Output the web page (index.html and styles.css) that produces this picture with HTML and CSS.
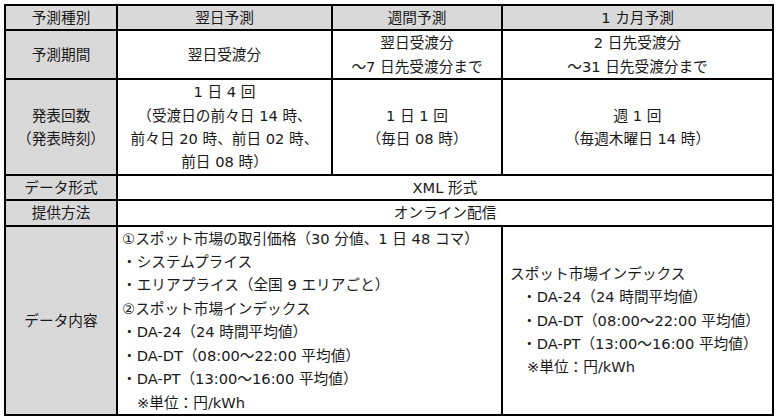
FILE: index.html
```html
<!DOCTYPE html>
<html lang="ja">
<head>
<meta charset="utf-8">
<link rel="stylesheet" href="styles.css">
</head>
<body>
<table class="spec">
  <colgroup>
    <col class="c1"><col class="c2"><col class="c3"><col class="c4">
  </colgroup>
  <tr class="head">
    <th>予測種別</th>
    <th>翌日予測</th>
    <th>週間予測</th>
    <th>1 カ月予測</th>
  </tr>
  <tr>
    <th>予測期間</th>
    <td>翌日受渡分</td>
    <td>翌日受渡分<br>～7 日先受渡分まで</td>
    <td>2 日先受渡分<br>～31 日先受渡分まで</td>
  </tr>
  <tr>
    <th>発表回数<br>（発表時刻）</th>
    <td>1 日 4 回<br>（受渡日の前々日 14 時、<br>前々日 20 時、前日 02 時、<br>前日 08 時）</td>
    <td>1 日 1 回<br>（毎日 08 時）</td>
    <td>週 1 回<br>（毎週木曜日 14 時）</td>
  </tr>
  <tr>
    <th>データ形式</th>
    <td colspan="3">XML 形式</td>
  </tr>
  <tr>
    <th>提供方法</th>
    <td colspan="3">オンライン配信</td>
  </tr>
  <tr>
    <th>データ内容</th>
    <td colspan="2" class="list left">
      <div>①スポット市場の取引価格（30 分値、1 日 48 コマ）</div>
      <div>・システムプライス</div>
      <div>・エリアプライス（全国 9 エリアごと）</div>
      <div>②スポット市場インデックス</div>
      <div>・DA-24（24 時間平均値）</div>
      <div>・DA-DT（08:00～22:00 平均値）</div>
      <div>・DA-PT（13:00～16:00 平均値）</div>
      <div class="note">※単位：円/kWh</div>
    </td>
    <td class="list right">
      <div>スポット市場インデックス</div>
      <div class="item">・DA-24（24 時間平均値）</div>
      <div class="item">・DA-DT（08:00～22:00 平均値）</div>
      <div class="item">・DA-PT（13:00～16:00 平均値）</div>
      <div class="note">※単位：円/kWh</div>
    </td>
  </tr>
</table>
</body>
</html>
```
FILE: styles.css
```css
html, body {
  margin: 0;
  padding: 0;
  background: #ffffff;
}

body {
  font-family: "DejaVu Sans", "Noto Sans CJK JP", sans-serif;
  font-size: 14.67px;
  color: #1a1a1a;
}

.spec {
  margin: 4px 0 0 4px;
  border-collapse: collapse;
  table-layout: fixed;
  width: 770px;
}

.c1 { width: 112px; }
.c2 { width: 215px; }
.c3 { width: 170px; }
.c4 { width: 271px; }

.spec th,
.spec td {
  border: 2px solid #000000;
  padding: 0;
  line-height: 23.4px;
  text-align: center;
  vertical-align: middle;
  font-weight: normal;
  white-space: nowrap;
}

.spec th {
  background: #d9d9d9;
}

.spec td.list {
  text-align: left;
}

.spec td.left {
  padding-left: 4px;
  vertical-align: top;
}

.spec td.left .note {
  padding-left: 15px;
}

.spec td.right {
  padding-left: 7px;
}

.spec td.right .item {
  padding-left: 12px;
}

.spec td.right .note {
  padding-left: 17px;
}
```
